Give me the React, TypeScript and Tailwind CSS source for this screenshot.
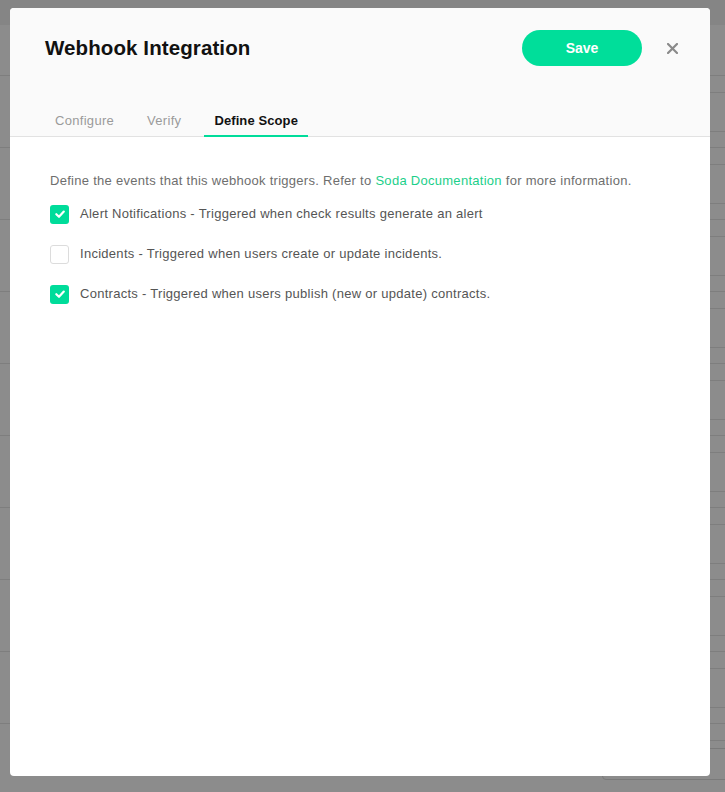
import React from "react";

const rows = Array.from({ length: 10 });

function Check({ checked }: { checked: boolean }) {
  return checked ? (
    <span className="flex h-[19px] w-[19px] shrink-0 items-center justify-center rounded-[3px] bg-[#00dc9a]">
      <svg width="12" height="12" viewBox="0 0 12 12" fill="none">
        <path d="M2.3 6.2 L5 8.8 L9.8 3.6" stroke="white" strokeWidth="2.2" strokeLinecap="round" strokeLinejoin="round" />
      </svg>
    </span>
  ) : (
    <span className="h-[19px] w-[19px] shrink-0 rounded-[3px] border border-[#dcdcdc] bg-white" />
  );
}

export default function App() {
  const items = [
    { checked: true, label: "Alert Notifications - Triggered when check results generate an alert" },
    { checked: false, label: "Incidents - Triggered when users create or update incidents." },
    { checked: true, label: "Contracts - Triggered when users publish (new or update) contracts." },
  ];
  return (
    <div
      className="relative h-[792px] w-[725px] overflow-hidden bg-[#8c8c8c]"
      style={{ fontFamily: '"Liberation Sans", Arial, Helvetica, sans-serif' }}
    >
      {/* underlying page behind overlay */}
      <div className="flex flex-col">
        <div className="h-[25px] bg-[#858585]" />
        <div className="h-[51px] border-b border-[#7e7e7e]" />
        {rows.map((_, i) => (
          <div key={i} className="flex h-[72px] justify-end border-b border-[#7e7e7e]">
            <div className="mt-[16px] h-[40px] w-[15px] border-y border-[#7e7e7e]" />
          </div>
        ))}
      </div>
      <div className="absolute right-[-10px] top-[748px] h-[32px] w-[133px] rounded-[4px] border border-[#7a7a7a]" />

      {/* modal */}
      <div className="absolute left-[10px] top-[8px] flex h-[768px] w-[700px] flex-col overflow-hidden rounded-[4px] bg-white">
        <div className="border-b border-[#e2e2e2] bg-[#fafafa]">
          <div className="flex items-center pl-[35px] pr-[26px] pt-[22px]">
            <h1 className="text-[20.5px] font-bold leading-[28px] tracking-[0.1px] text-[#111]">Webhook Integration</h1>
            <button className="ml-auto h-[36px] w-[120px] rounded-full bg-[#00de9a] text-[14px] font-bold text-white">
              Save
            </button>
            <button className="ml-[18px] flex h-[24px] w-[24px] items-center justify-center">
              <svg width="11" height="11" viewBox="0 0 11 11" fill="none">
                <path d="M1 1 L10 10 M10 1 L1 10" stroke="#8a8a8a" strokeWidth="2.2" strokeLinecap="square" />
              </svg>
            </button>
          </div>
          <div className="-mb-px mt-[45px] flex gap-[13px] pl-[35px] text-[13px] leading-[20px]">
            <div className="border-b-2 border-transparent px-[10px] pb-[4px] tracking-[0.3px] text-[#9a9a9a]">Configure</div>
            <div className="border-b-2 border-transparent px-[10px] pb-[4px] tracking-[0.3px] text-[#9a9a9a]">Verify</div>
            <div className="border-b-2 border-[#00dc9a] px-[10px] pb-[4px] font-bold tracking-[0.1px] text-[#111]">Define Scope</div>
          </div>
        </div>
        <div className="px-[40px] pt-[34px] text-[13px] leading-[20px] tracking-[0.28px]">
          <p className="text-[#6e6e6e]">
            Define the events that this webhook triggers. Refer to{" "}
            <span className="text-[#1ccf8a]">Soda Documentation</span> for more information.
          </p>
          <div className="mt-[3px] flex flex-col">
            {items.map((it, i) => (
              <div key={i} className="flex h-[40px] items-center gap-[11px]">
                <Check checked={it.checked} />
                <span className="text-[#555]">{it.label}</span>
              </div>
            ))}
          </div>
        </div>
      </div>
    </div>
  );
}
